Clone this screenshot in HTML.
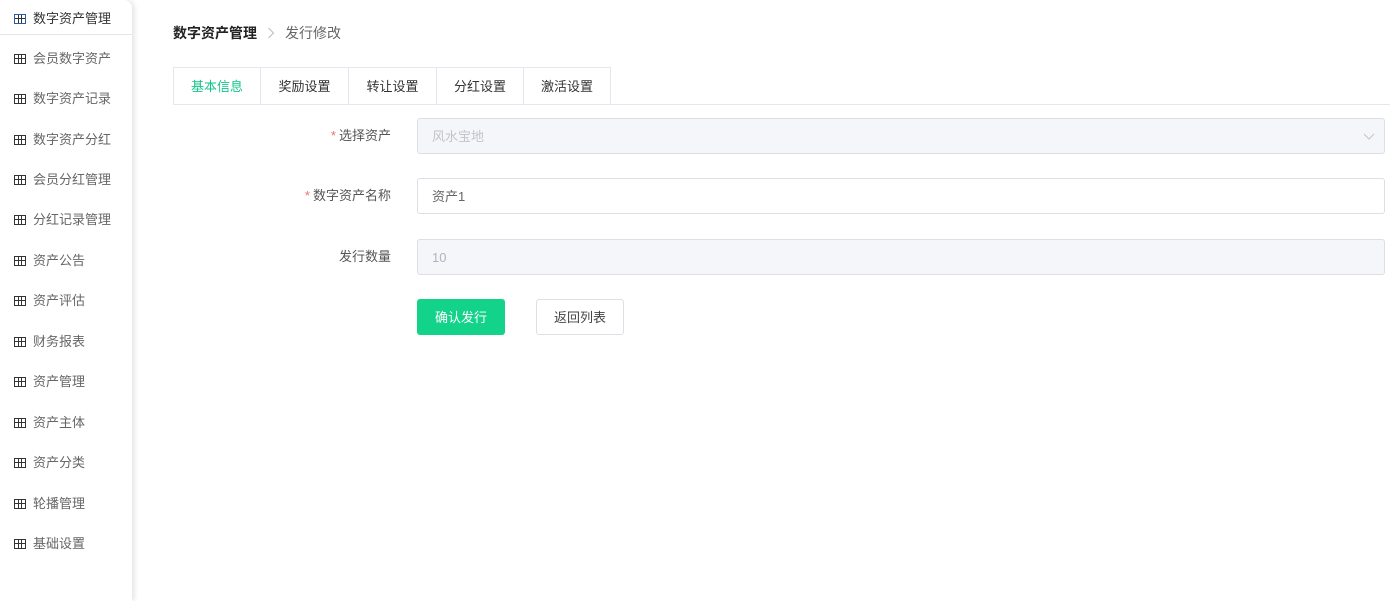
<!DOCTYPE html><html><head><meta charset="utf-8"><style>
*{box-sizing:border-box;margin:0;padding:0}
body{width:1390px;height:601px;background:#fff;font-family:"Liberation Sans","Noto Sans CJK SC",sans-serif;font-size:13px;color:#333;position:relative;overflow:hidden}
.side{position:absolute;left:0;top:0;width:132px;height:601px;background:#fff;box-shadow:2px 0 6px rgba(0,0,0,.12);border-radius:0 8px 0 0}
.it{position:absolute;left:0;width:132px;height:20px;line-height:20px;padding-left:14px;color:#666;font-size:13px;display:flex;align-items:center}
.it i{display:inline-block;width:12px;height:10px;border:1px solid #333;margin-right:7px;background:linear-gradient(#333,#333) 0 3px/100% 1px no-repeat,linear-gradient(90deg,#333,#333) 3px 0/1px 100% no-repeat,linear-gradient(90deg,#333,#333) 6px 0/1px 100% no-repeat}
.abs{position:absolute}
.tab{position:absolute;top:67px;height:38px;border:1px solid #e4e7ed;border-bottom:none;text-align:center;line-height:37px;font-size:13px;color:#333}
.inp{position:absolute;left:417px;width:968px;height:36px;border:1px solid #dcdfe6;border-radius:3px;padding-left:14px;line-height:35px;font-size:13px}
.lab{position:absolute;right:999px;font-size:13px;color:#555;line-height:37px}
.lab b{color:#f56c6c;font-weight:normal;margin-right:3px}
</style></head><body>
<div class="side">
<div class="abs" style="left:0;top:34px;width:132px;height:1px;background:#e6e6e6"></div>
<div class="it" style="top:9px;color:#333"><i style="border-color:#2a5aa8"></i>数字资产管理</div>
<div class="it" style="top:49px"><i></i>会员数字资产</div>
<div class="it" style="top:89px"><i></i>数字资产记录</div>
<div class="it" style="top:130px"><i></i>数字资产分红</div>
<div class="it" style="top:170px"><i></i>会员分红管理</div>
<div class="it" style="top:210px"><i></i>分红记录管理</div>
<div class="it" style="top:251px"><i></i>资产公告</div>
<div class="it" style="top:291px"><i></i>资产评估</div>
<div class="it" style="top:332px"><i></i>财务报表</div>
<div class="it" style="top:372px"><i></i>资产管理</div>
<div class="it" style="top:413px"><i></i>资产主体</div>
<div class="it" style="top:453px"><i></i>资产分类</div>
<div class="it" style="top:494px"><i></i>轮播管理</div>
<div class="it" style="top:534px"><i></i>基础设置</div>
</div>
<div class="abs" style="left:173px;top:23px;line-height:20px;font-size:14px;display:flex;align-items:center"><b style="color:#222">数字资产管理</b><svg width="8" height="12" style="margin:0 10px 0 10px"><path d="M1.5 1l5 5-5 5" stroke="#bbb" fill="none"/></svg><span style="color:#666">发行修改</span></div>
<div class="abs" style="left:173px;top:104px;width:1217px;height:1px;background:#e4e7ed"></div>
<div class="tab" style="left:173px;width:88px;color:#13c58a">基本信息</div>
<div class="tab" style="left:260px;width:89px">奖励设置</div>
<div class="tab" style="left:348px;width:89px">转让设置</div>
<div class="tab" style="left:436px;width:88px">分红设置</div>
<div class="tab" style="left:523px;width:88px">激活设置</div>
<div class="lab" style="top:117px"><b>*</b>选择资产</div>
<div class="inp" style="top:118px;background:#f5f6fa;color:#c0c4cc">风水宝地<svg class="abs" style="right:9px;top:14px" width="12" height="8"><path d="M1 1l5 5 5-5" stroke="#c0c4cc" fill="none"/></svg></div>
<div class="lab" style="top:177px"><b>*</b>数字资产名称</div>
<div class="inp" style="top:178px;color:#666">资产1</div>
<div class="lab" style="top:238px">发行数量</div>
<div class="inp" style="top:239px;background:#f5f6fa;color:#b0b4bc">10</div>
<div class="abs" style="left:417px;top:299px;width:88px;height:36px;background:#13d38a;border-radius:3px;color:#fff;text-align:center;line-height:37px">确认发行</div>
<div class="abs" style="left:536px;top:299px;width:88px;height:36px;border:1px solid #dcdfe6;border-radius:3px;color:#444;text-align:center;line-height:35px">返回列表</div>
</body></html>
